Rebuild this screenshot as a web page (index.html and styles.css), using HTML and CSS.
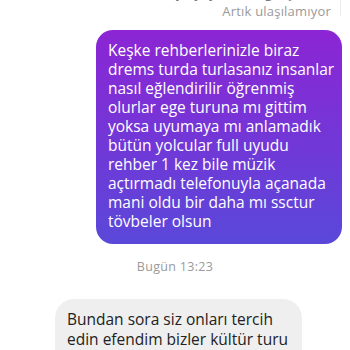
FILE: index.html
```html
<!DOCTYPE html>
<html lang="tr">
<head>
	<meta charset="UTF-8">
	<title>Mesajlar</title>
	<link rel="stylesheet" href="styles.css">
</head>
<body>
	<div class="chat">
		<div class="prev">
			<div class="prev-text">bu hikaye yayında değil, şu an</div>
			<div class="prev-note">Artık ulaşılamıyor</div>
		</div>

		<div class="msg msg-out">
			Keşke rehberlerinizle biraz<br>
			drems turda turlasanız insanlar<br>
			nasıl eğlendirilir öğrenmiş<br>
			olurlar ege turuna mı gittim<br>
			yoksa uyumaya mı anlamadık<br>
			bütün yolcular full uyudu<br>
			rehber 1 kez bile müzik<br>
			açtırmadı telefonuyla açanada<br>
			mani oldu bir daha mı ssctur<br>
			tövbeler olsun
		</div>

		<div class="time">Bugün 13:23</div>

		<div class="msg msg-in">
			Bundan sora siz onları tercih<br>
			edin efendim bizler kültür turu<br>
			yapıyoruz kültürlü insanlar
		</div>
	</div>
</body>
</html>
```

FILE: styles.css
```css
html, body{
	margin: 0;
	padding: 0;
	background: #fff;
	height: 350px;
	overflow: hidden;
}

.chat{
	display: flex;
	flex-direction: column;
	font-family: "Open Sans", "Noto Sans", sans-serif;
}

.prev{
	position: relative;
	margin-right: 9px;
	border-right: 1px solid #ececec;
	height: 16px;
}

.prev-text{
	position: absolute;
	right: 18px;
	top: -17px;
	font-size: 14px;
	line-height: 18px;
	color: #777;
}

.prev-note{
	position: absolute;
	right: 9px;
	top: 3px;
	font-size: 13px;
	line-height: 16px;
	color: #9a9a9a;
	letter-spacing: 0.2px;
}

.msg{
	font-size: 15.5px;
	line-height: 19px;
	white-space: nowrap;
	border-radius: 17px;
	box-sizing: border-box;
}

.msg-out{
	align-self: flex-end;
	margin-top: 14px;
	margin-right: 8px;
	width: 246px;
	padding: 11px 8px 13px 12px;
	color: #fff;
	background: linear-gradient(to bottom, #8c25d4, #5a48d9);
}

.time{
	align-self: center;
	margin-top: 15px;
	font-size: 12.5px;
	line-height: 16px;
	color: #9a9a9a;
	letter-spacing: 0.3px;
}

.msg-in{
	align-self: flex-start;
	margin-top: 24px;
	margin-left: 55px;
	width: 247px;
	padding: 10px 14px 12px 12px;
	line-height: 20px;
	color: #222;
	background: #efefef;
	border-radius: 19px;
}
```
